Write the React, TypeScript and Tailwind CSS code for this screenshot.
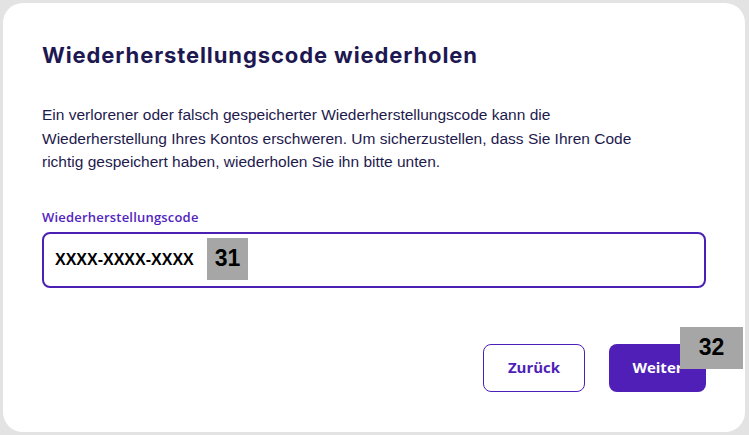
import React from 'react';

const App: React.FC = () => {
  return (
    <div className="h-screen w-full bg-[#e3e3e3] pt-[3px] pl-[3px] pr-[4px] pb-[3px] font-[family-name:'Open_Sans',sans-serif]">
      <div className="relative h-full bg-white rounded-[20px] px-[39px] pt-[38px]">
        <h2 className="text-[22px] leading-[28px] font-bold tracking-[0.9px] text-[#1e1852] font-[family-name:Inter,sans-serif]">
          Wiederherstellungscode wiederholen
        </h2>

        <p className="mt-[34px] text-[15.5px] leading-[23.5px] text-[#1e1a4d] font-[family-name:'Liberation_Sans',Arial,sans-serif]">
          Ein verlorener oder falsch gespeicherter Wiederherstellungscode kann die
          <br />
          Wiederherstellung Ihres Kontos erschweren. Um sicherzustellen, dass Sie Ihren Code
          <br />
          richtig gespeichert haben, wiederholen Sie ihn bitte unten.
        </p>

        <label className="block mt-[34px] text-[13px] leading-[18px] font-semibold text-[#5224c0] tracking-[0.2px]">
          Wiederherstellungscode
        </label>

        {/* Eingabefeld */}
        <div className="relative mt-[6px] h-[56px] border-2 border-[#4a1fb3] rounded-[8px] flex items-center pl-[11px] font-[family-name:'Liberation_Sans',Arial,sans-serif]">
          <span className="text-[16px] font-bold text-black">XXXX-XXXX-XXXX</span>
          <span className="absolute left-[163px] top-[4px] w-[41px] h-[42px] bg-[#a6a6a6] flex items-center justify-center text-[23px] font-bold text-black">
            31
          </span>
        </div>

        <div className="mt-[56px] flex justify-end gap-[24px]">
          <button className="w-[102px] h-[48px] border border-[#4e1fb8] rounded-[8px] text-[15px] font-bold text-[#4e1fb8]">
            Zurück
          </button>
          <button className="relative w-[97px] h-[48px] bg-[#4f1fb8] rounded-[8px] text-[15px] font-bold text-white">
            Weiter
            <span className="absolute left-[71px] top-[-17px] w-[63px] h-[42px] bg-[#a6a6a6] flex items-center justify-center text-[23px] font-bold text-black font-[family-name:'Liberation_Sans',Arial,sans-serif]">
              32
            </span>
          </button>
        </div>
      </div>
    </div>
  );
};

export default App;
